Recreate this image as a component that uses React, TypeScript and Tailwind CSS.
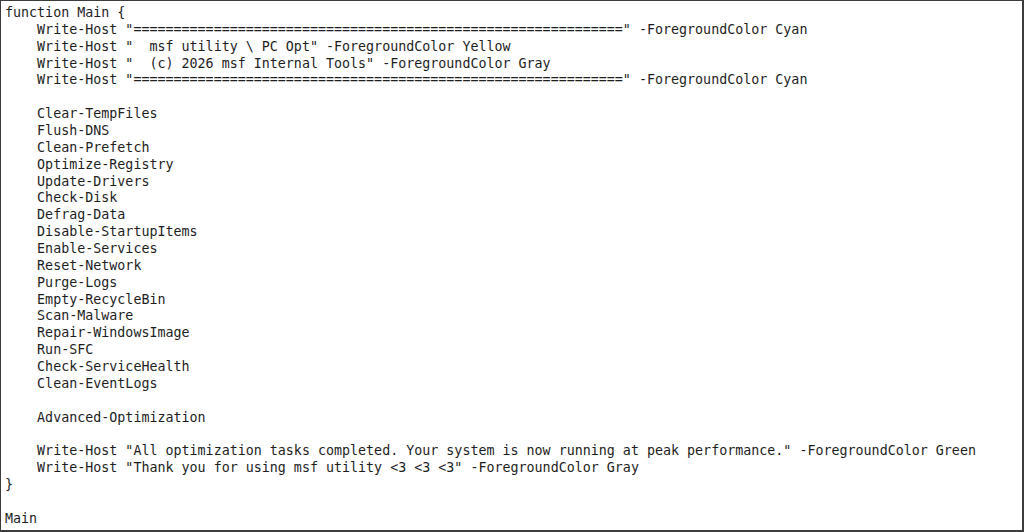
const bar = "=".repeat(61);

const lines = [
  "function Main {",
  `    Write-Host "${bar}" -ForegroundColor Cyan`,
  '    Write-Host "  msf utility \\ PC Opt" -ForegroundColor Yellow',
  '    Write-Host "  (c) 2026 msf Internal Tools" -ForegroundColor Gray',
  `    Write-Host "${bar}" -ForegroundColor Cyan`,
  "",
  "    Clear-TempFiles",
  "    Flush-DNS",
  "    Clean-Prefetch",
  "    Optimize-Registry",
  "    Update-Drivers",
  "    Check-Disk",
  "    Defrag-Data",
  "    Disable-StartupItems",
  "    Enable-Services",
  "    Reset-Network",
  "    Purge-Logs",
  "    Empty-RecycleBin",
  "    Scan-Malware",
  "    Repair-WindowsImage",
  "    Run-SFC",
  "    Check-ServiceHealth",
  "    Clean-EventLogs",
  "",
  "    Advanced-Optimization",
  "",
  '    Write-Host "All optimization tasks completed. Your system is now running at peak performance." -ForegroundColor Green',
  '    Write-Host "Thank you for using msf utility <3 <3 <3" -ForegroundColor Gray',
  "}",
  "",
  "Main",
];

export default function App() {
  return (
    <div className="w-[1024px] h-[532px] bg-white border-t border-l border-r-2 border-b-2 border-[#3c3c3c] overflow-hidden">
      <pre className="pl-[4px] pt-[4px] m-0 font-['DejaVu_Sans_Mono','Liberation_Mono',monospace] text-[13.33px] leading-[16.87px] text-[#1e1e1e] whitespace-pre">
        {lines.map((line, i) => (
          <div key={i} className="h-[16.87px]">
            {line}
          </div>
        ))}
      </pre>
    </div>
  );
}
